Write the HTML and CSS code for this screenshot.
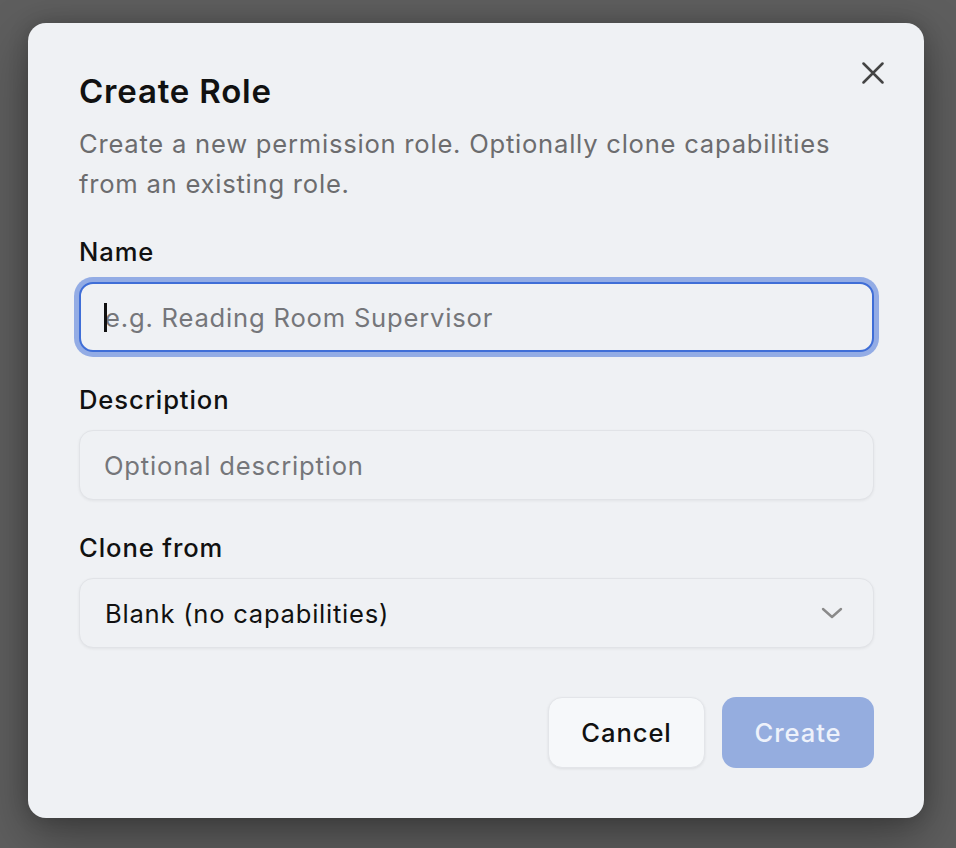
FILE: index.html
```html
<!DOCTYPE html>
<html lang="en">
<head>
<meta charset="utf-8">
<title>Create Role</title>
<link rel="stylesheet" href="styles.css">
</head>
<body>
<div class="backdrop">
  <div class="dialog" role="dialog" aria-labelledby="dlg-title">
    <button class="close" aria-label="Close">
      <svg width="22" height="22" viewBox="0 0 22 22" fill="none" stroke="#444" stroke-width="2.5" stroke-linecap="round"><path d="M1.5 1.5 L20.5 20.5 M20.5 1.5 L1.5 20.5"/></svg>
    </button>
    <h2 class="title" id="dlg-title">Create Role</h2>
    <p class="subtitle">Create a new permission role. Optionally clone capabilities from an existing role.</p>

    <div class="field">
      <label class="label" for="name">Name</label>
      <div class="input-wrap">
        <input class="input focused" id="name" type="text" placeholder="e.g. Reading Room Supervisor">
        <span class="caret"></span>
      </div>
    </div>

    <div class="field">
      <label class="label" for="desc">Description</label>
      <input class="input" id="desc" type="text" placeholder="Optional description">
    </div>

    <div class="field">
      <label class="label" for="clone">Clone from</label>
      <div class="select">
        <span class="select-value">Blank (no capabilities)</span>
        <svg class="chevron" width="22" height="12" viewBox="0 0 22 12" fill="none" stroke="#8a8a8a" stroke-width="2.4" stroke-linecap="round" stroke-linejoin="round"><path d="M2 2 L11 10 L20 2"/></svg>
      </div>
    </div>

    <div class="actions">
      <button class="btn btn-cancel">Cancel</button>
      <button class="btn btn-create">Create</button>
    </div>
  </div>
</div>
</body>
</html>
```
FILE: styles.css
```css
* { box-sizing: border-box; }
html, body { margin: 0; padding: 0; }
body {
  background: #5e5e5e;
  font-family: Inter, "Noto Sans", "Liberation Sans", sans-serif;
  width: 956px;
  height: 848px;
  overflow: hidden;
}
.backdrop {
  padding: 23px 32px 0 28px;
}
.dialog {
  position: relative;
  width: 896px;
  height: 795px;
  background: #eff1f4;
  border-radius: 18px;
  box-shadow: 0 18px 50px rgba(0,0,0,0.35), 0 0 20px rgba(0,0,0,0.18);
  padding: 48px 50px 50px 51px;
  display: flex;
  flex-direction: column;
}
.close {
  position: absolute;
  top: 33px;
  right: 34px;
  width: 34px;
  height: 34px;
  padding: 0;
  border: none;
  background: transparent;
  display: flex;
  align-items: center;
  justify-content: center;
}
.title {
  margin: 0;
  font-size: 33px;
  line-height: 40px;
  font-weight: 600;
  color: #111;
  letter-spacing: 0.8px;
}
.subtitle {
  margin: 13px 0 0;
  font-size: 25.6px;
  line-height: 40px;
  color: #6c6c6e;
  font-weight: 400;
  letter-spacing: 0.76px;
  max-width: 790px;
}
.field {
  margin-top: 32px;
  display: flex;
  flex-direction: column;
}
.label {
  font-size: 25.6px;
  line-height: 32px;
  font-weight: 500;
  color: #111;
  letter-spacing: 0.9px;
  margin-bottom: 14px;
}
.input-wrap { position: relative; }
.input {
  width: 100%;
  height: 70px;
  border-radius: 14px;
  border: 1.5px solid #e1e3e7;
  background: #eff1f4;
  box-shadow: 0 1px 3px rgba(0,0,0,0.06);
  padding: 0 24px;
  font-family: inherit;
  font-size: 25.6px;
  letter-spacing: 0.8px;
  color: #111;
  outline: none;
}
.input::placeholder { color: #75767a; }
.input.focused {
  border: 2px solid #3f6ed7;
  box-shadow: 0 0 0 5px rgba(63,110,215,0.52);
  padding-left: 24px;
}
.caret {
  position: absolute;
  left: 25px;
  top: 21px;
  width: 3px;
  height: 29px;
  background: #111;
}
.select {
  height: 70px;
  border-radius: 14px;
  border: 1.5px solid #e1e3e7;
  background: #eff1f4;
  box-shadow: 0 1px 3px rgba(0,0,0,0.06);
  padding: 0 30px 0 25px;
  display: flex;
  align-items: center;
  justify-content: space-between;
}
.select-value {
  font-size: 25.6px;
  letter-spacing: 0.75px;
  color: #111;
}
.actions {
  margin-top: auto;
  display: flex;
  justify-content: flex-end;
  gap: 17px;
}
.btn {
  height: 71px;
  border-radius: 14px;
  font-family: inherit;
  font-size: 25.6px;
  font-weight: 500;
  letter-spacing: 0.9px;
  padding: 0;
}
.btn-cancel {
  width: 157px;
  background: #f6f8fa;
  border: 1.5px solid #e3e5e9;
  box-shadow: 0 1px 3px rgba(0,0,0,0.08);
  color: #111;
}
.btn-create {
  width: 152px;
  background: #95addf;
  border: none;
  color: #eef2fb;
}
```
